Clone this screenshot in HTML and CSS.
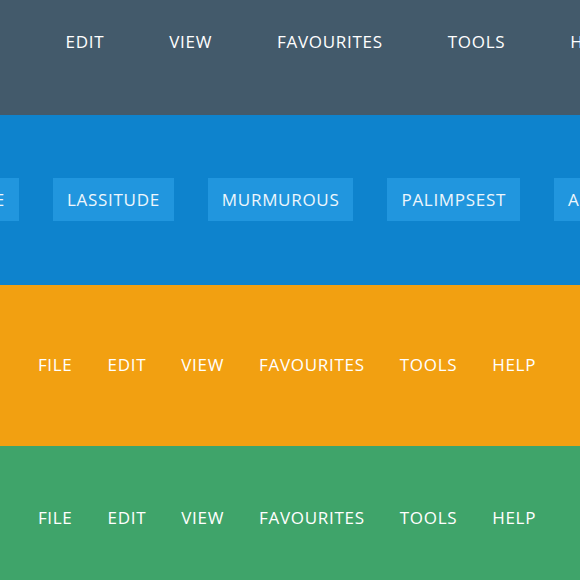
FILE: index.html
```html
<!DOCTYPE html>
<html>
<head>
<meta charset="utf-8">
<link rel="stylesheet" href="styles.css">
</head>
<body>
<section class="band band-gray">
  <nav class="menu menu-wide">
    <a>File</a><a>Edit</a><a>View</a><a>Favourites</a><a>Tools</a><a>Help</a>
  </nav>
</section>
<section class="band band-blue">
  <nav class="menu menu-boxes">
    <div class="lead"><a class="box">Sublime</a></div>
    <a class="box">Lassitude</a>
    <a class="box">Murmurous</a>
    <a class="box">Palimpsest</a>
    <a class="box">Assemblage</a>
  </nav>
</section>
<section class="band band-orange">
  <nav class="menu menu-tight">
    <a>File</a><a>Edit</a><a>View</a><a>Favourites</a><a>Tools</a><a>Help</a>
  </nav>
</section>
<section class="band band-green">
  <nav class="menu menu-tight">
    <a>File</a><a>Edit</a><a>View</a><a>Favourites</a><a>Tools</a><a>Help</a>
  </nav>
</section>
</body>
</html>
```
FILE: styles.css
```css
html, body {
  margin: 0;
  padding: 0;
}
body {
  width: 580px;
  height: 580px;
  overflow: hidden;
  font-family: "Open Sans", "Liberation Sans", sans-serif;
  font-size: 17px;
  color: #fff;
}
.band {
  display: flex;
  overflow: hidden;
  box-sizing: border-box;
}
.band-gray {
  background: #435a6b;
  height: 115px;
  padding-top: 32px;
}
.band-blue {
  background: #0e83cd;
  height: 170px;
  padding-top: 63px;
}
.band-orange {
  background: #f2a011;
  height: 161px;
  padding-top: 70px;
}
.band-green {
  background: #3fa46a;
  height: 134px;
  padding-top: 62px;
}
.menu {
  display: flex;
  width: 100%;
  align-items: flex-start;
}
.menu a {
  flex: 0 0 auto;
  display: block;
  text-transform: uppercase;
  letter-spacing: 0.7px;
  line-height: 20px;
  white-space: nowrap;
  color: #fff;
}
.menu-wide {
  justify-content: center;
  gap: 65px;
}
.menu-tight {
  justify-content: center;
  gap: 35px;
  padding-right: 6px;
  box-sizing: border-box;
}
.menu-boxes {
  gap: 34px;
}
.lead {
  flex: 0 0 19px;
  min-width: 0;
  display: flex;
  justify-content: flex-end;
}
.menu a.box {
  background: #2196de;
  padding: 0 14px;
  height: 43px;
  line-height: 43px;
  color: #eef6fc;
}
```
